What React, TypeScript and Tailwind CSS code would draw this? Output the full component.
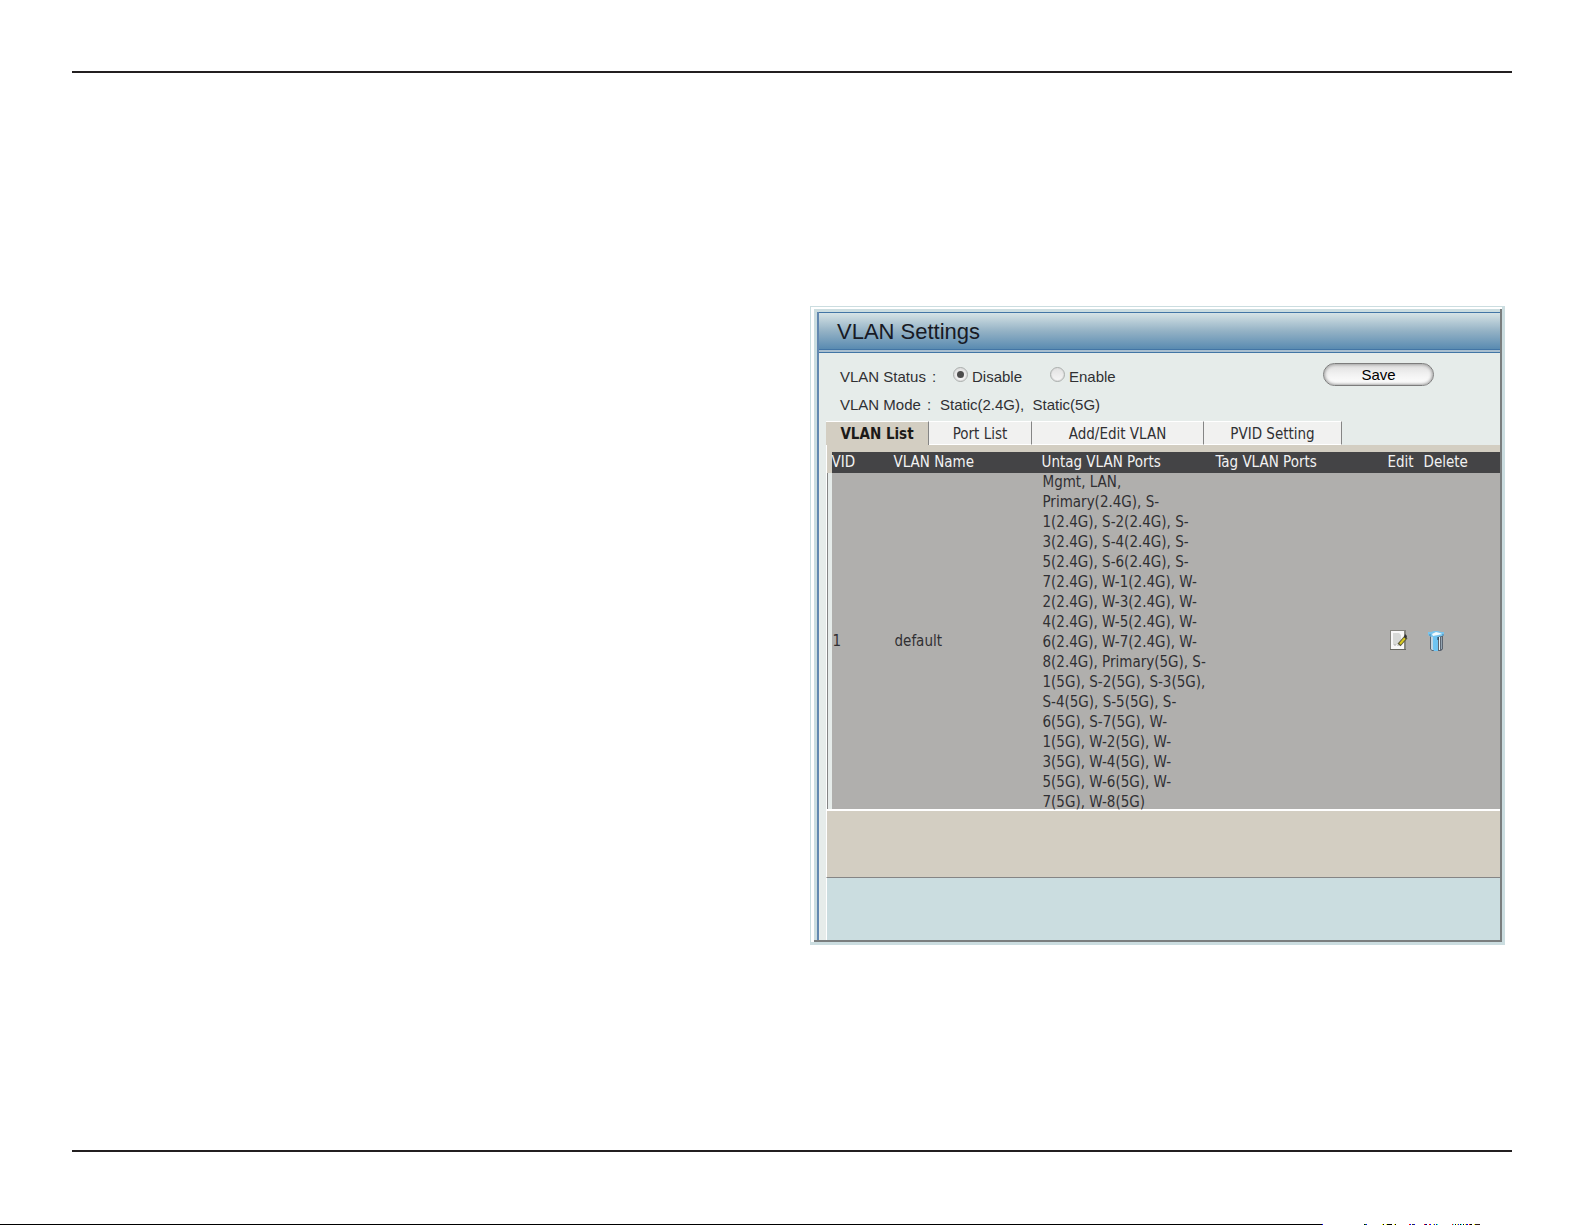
import { useState } from 'react';

const tabs = [
  { label: 'VLAN List', width: 'w-[103px]' },
  { label: 'Port List', width: 'w-[103px]' },
  { label: 'Add/Edit VLAN', width: 'w-[172px]' },
  { label: 'PVID Setting', width: 'w-[138px]' },
];

const columns = [
  { label: 'VID', width: 'w-[62px]' },
  { label: 'VLAN Name', width: 'w-[148px]' },
  { label: 'Untag VLAN Ports', width: 'w-[174px]' },
  { label: 'Tag VLAN Ports', width: 'w-[172px]' },
  { label: 'Edit', width: 'w-[36px]' },
  { label: 'Delete', width: 'w-auto' },
];

const vlans = [
  {
    vid: 1,
    name: 'default',
    untag: [
      'Mgmt, LAN,',
      'Primary(2.4G), S-',
      '1(2.4G), S-2(2.4G), S-',
      '3(2.4G), S-4(2.4G), S-',
      '5(2.4G), S-6(2.4G), S-',
      '7(2.4G), W-1(2.4G), W-',
      '2(2.4G), W-3(2.4G), W-',
      '4(2.4G), W-5(2.4G), W-',
      '6(2.4G), W-7(2.4G), W-',
      '8(2.4G), Primary(5G), S-',
      '1(5G), S-2(5G), S-3(5G),',
      'S-4(5G), S-5(5G), S-',
      '6(5G), S-7(5G), W-',
      '1(5G), W-2(5G), W-',
      '3(5G), W-4(5G), W-',
      '5(5G), W-6(5G), W-',
      '7(5G), W-8(5G)',
    ],
    tag: '',
  },
];

// [x, width, colour] of each dash after the footer rule
const dashes: [number, number, string][] = [
  [0, 1, '#0000ff'],
  [42, 1, '#000000'],
  [43, 1, '#008000'],
  [44, 1, '#0000ff'],
  [60, 1, '#ffff00'],
  [61, 1, '#000000'],
  [64, 1, '#ffff00'],
  [65, 5, '#000000'],
  [72, 1, '#ffff00'],
  [73, 1, '#000000'],
  [87, 1, '#ff0000'],
  [88, 1, '#0000ff'],
  [90, 2, '#303030'],
  [92, 1, '#0000ff'],
  [102, 1, '#ff0000'],
  [103, 2, '#000080'],
  [107, 1, '#ff0000'],
  [108, 1, '#0000ff'],
  [111, 1, '#ffff00'],
  [112, 1, '#0000ff'],
  [114, 1, '#303030'],
  [115, 1, '#00ffff'],
  [130, 1, '#ff0000'],
  [131, 1, '#00ffff'],
  [133, 1, '#000000'],
  [135, 1, '#ffff00'],
  [136, 1, '#0000ff'],
  [138, 1, '#000000'],
  [139, 1, '#00ffff'],
  [141, 1, '#000000'],
  [143, 1, '#ffff00'],
  [144, 2, '#0000c0'],
  [147, 1, '#ff0000'],
  [148, 2, '#000000'],
  [152, 1, '#ffff00'],
  [153, 5, '#301818'],
];

function EditIcon() {
  return (
    <svg width="19" height="22" viewBox="0 0 19 22" aria-hidden="true">
      <path d="M1 0h16v20H1z" fill="#85857f" />
      <path d="M2 1h13v18H2z" fill="#f8f8f8" />
      <path d="M4 3h6l2 2v7l-4 3H4z" fill="#d8dad8" />
      <path d="M6 14v2M9 15v1" stroke="#aaa" />
      <path d="M1 19.5h16" stroke="#66665f" />
      <path d="M10 15l7-8" stroke="#5a5838" strokeWidth="4" />
      <path d="M11 14l5-6" stroke="#d8ca20" strokeWidth="2" />
      <path d="M16 4l2 2-1 3-2-2z" fill="#333" />
    </svg>
  );
}

function TrashIcon() {
  return (
    <svg width="17" height="22" viewBox="0 0 17 22" aria-hidden="true">
      <path d="M2 6h13v13l-2 2H4l-2-2z" fill="#5b6470" />
      <path d="M3 6h3v13l1 1H4l-1-1z" fill="#c3d6e2" />
      <path d="M5 6h5v15H6l-1-2z" fill="#6fc4f2" />
      <path d="M11 7h1v13h-1z" fill="#e9f2f6" />
      <path d="M13 7h1v12h-1z" fill="#93a3b0" />
      <path d="M0 2h3l3-1h4l3 1h3v2l-2 2-4 1-3-1-3 1-3-1-1-2z" fill="#79c5ee" />
      <path d="M4 4l4-2 4 1 2 1-4 1-5 1z" fill="#f2fafd" />
      <path d="M1 5h2M14 5h2" stroke="#3a87b8" />
      <path d="M10 7v3" stroke="#1e3448" />
    </svg>
  );
}

const radioClass =
  'mb-1.5 flex size-[15px] shrink-0 appearance-none rounded-full border border-[#a9adab] bg-linear-to-b from-[#e2e2e2] to-[#f6f6f6] shadow-[inset_0_0_0_1px_#dedede] before:m-auto before:size-[7px] before:rounded-full checked:before:bg-[#4c4c4c]';

export default function App() {
  const [status, setStatus] = useState('disable');
  const [active, setActive] = useState('VLAN List');

  return (
    <div className="flex min-h-screen flex-col bg-white font-['Liberation_Sans',Arial,sans-serif] text-[15px] text-[#303033]">
      <div className="mt-[71px] mr-[73px] ml-[72px] grid flex-1 grid-cols-2 content-start border-y-2 border-[#231f20] pt-[233px] pb-[200px]">
        <main className="col-start-2 mr-[7px] ml-[18px] border border-r-[3px] border-b-[3px] border-[#cbdde0] bg-white pt-0.5 pl-[3px]">
          <div className="border-r-2 border-b-2 border-[#7a7e7e] bg-[#cbdde0] pt-[3px] pl-[3px]">
            <div className="border-l-2 border-[#6288b0] bg-[#e6ecea]">
              <header className="border-t border-[#4275a5] bg-[#a9bfd0]">
                <h1 className="flex h-[37px] items-center border-b border-[#4275a5] bg-linear-to-b from-[#d6e3e5] via-[#94b2c5] to-[#598bb1] pl-[18px] text-[22px] text-[#171a25]">
                  VLAN Settings
                </h1>
                <div className="h-[3px] border-b border-[#4275a5]" />
              </header>

              <form onSubmit={(e) => e.preventDefault()}>
                <div className="mt-[9px] flex h-[25px] items-center pr-[66px] pl-[21px]">
                  <fieldset className="flex flex-1 items-center pt-1.5">
                    <legend className="float-left flex w-[113px] gap-1.5">
                      <span>VLAN Status</span>
                      <span>:</span>
                    </legend>
                    <label className="flex w-[97px] items-center gap-1">
                      <input
                        type="radio"
                        name="status"
                        className={radioClass}
                        checked={status === 'disable'}
                        onChange={() => setStatus('disable')}
                      />
                      Disable
                    </label>
                    <label className="flex items-center gap-1">
                      <input
                        type="radio"
                        name="status"
                        className={radioClass}
                        checked={status === 'enable'}
                        onChange={() => setStatus('enable')}
                      />
                      Enable
                    </label>
                  </fieldset>
                  <button
                    type="submit"
                    className="h-[23px] w-[111px] rounded-full border border-[#7c7c7c] bg-linear-to-b from-[#dedede] via-[#f2f2f2] to-white pb-px leading-none text-black shadow-[inset_0_0_3px_1px_#a4a4a4]"
                  >
                    Save
                  </button>
                </div>
              </form>

              <p className="mt-2 flex h-5 items-center pt-px pl-[21px]">
                <span className="flex w-[100px] gap-1.5">
                  <span>VLAN Mode</span>
                  <span>:</span>
                </span>
                <span className="whitespace-pre">Static(2.4G),  Static(5G)</span>
              </p>

              <section className="mt-[6px] ml-[7px] font-['DejaVu_Sans_Condensed','DejaVu_Sans',Tahoma,sans-serif]">
                <nav className="flex h-6">
                  {tabs.map((tab) => (
                    <button
                      key={tab.label}
                      type="button"
                      onClick={() => setActive(tab.label)}
                      className={`${tab.width} border-t border-r border-t-white border-r-[#858585] pt-px text-center leading-5 ${
                        tab.label === active
                          ? 'bg-[#d3cec2] font-bold text-[#1c1a18]'
                          : 'border-b border-b-white bg-[#f1f1f0]'
                      }`}
                    >
                      {tab.label}
                    </button>
                  ))}
                </nav>

                <div className="border-b border-l border-b-[#858585] border-l-white bg-[#d3cec2] pt-[7px] pb-[66px]">
                  <table className="w-full table-fixed border-collapse border-b-2 border-white text-left">
                    <thead>
                      <tr className="h-[21px] bg-[#444446] align-top text-[#f2f2f2]">
                        <th className="w-[4px] bg-[#d3cec2] p-0" />
                        {columns.map((col) => (
                          <th
                            key={col.label}
                            className={`${col.width} p-0 leading-5 font-normal whitespace-nowrap`}
                          >
                            {col.label}
                          </th>
                        ))}
                      </tr>
                    </thead>
                    <tbody>
                      {vlans.map((vlan) => (
                        <tr key={vlan.vid} className="bg-[#b0afad]">
                          <td className="border-l border-l-[#858585] bg-[#e6ecea] p-0" />
                          <td className="p-0 pl-px">{vlan.vid}</td>
                          <td className="p-0 pl-px">{vlan.name}</td>
                          <td className="p-0 pl-px">
                            <div className="-mt-px -mb-[3px] leading-5 whitespace-pre">
                              {vlan.untag.join('\n')}
                            </div>
                          </td>
                          <td className="p-0 pl-px">{vlan.tag}</td>
                          <td className="p-0 pl-px">
                            <button type="button" aria-label="Edit" className="block">
                              <EditIcon />
                            </button>
                          </td>
                          <td className="p-0 pl-1">
                            <button type="button" aria-label="Delete" className="block">
                              <TrashIcon />
                            </button>
                          </td>
                        </tr>
                      ))}
                    </tbody>
                  </table>
                </div>
                <div className="h-[62px] border-l border-white bg-[#cbdde0]" />
              </section>
            </div>
          </div>
        </main>
      </div>

      <footer className="mt-[72px] flex h-px">
        <div className="flex-1 bg-black" />
        <svg width="263" height="1" aria-hidden="true">
          {dashes.map(([x, width, fill]) => (
            <rect key={x} x={x} width={width} height="1" fill={fill} />
          ))}
        </svg>
      </footer>
    </div>
  );
}
